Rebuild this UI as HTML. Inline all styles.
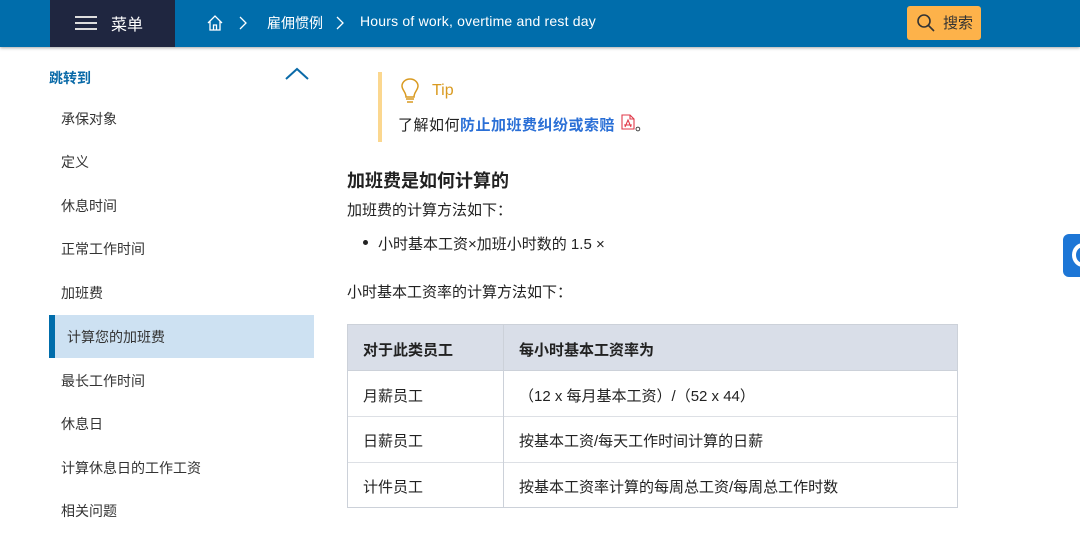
<!DOCTYPE html>
<html><head><meta charset="utf-8"><style>
*{margin:0;padding:0;box-sizing:border-box}
body{width:1080px;height:534px;overflow:hidden;background:#fff;font-family:"Liberation Sans","Noto Sans CJK SC",sans-serif;color:#222;position:relative}
.hdr{position:absolute;left:0;top:0;width:1080px;height:47px;background:#006dab;box-shadow:0 1px 3px rgba(0,0,0,.35)}
.menu{position:absolute;left:50px;top:0;width:125px;height:47px;background:#1f2640;color:#fff;font-size:16px}
.menu span{position:absolute;left:61px;top:11px}
.bar{position:absolute;left:25px;width:22px;height:2px;background:#ddd}
.crumb{position:absolute;top:13px;color:#fff;font-size:14px}
.search{position:absolute;left:907px;top:6px;width:74px;height:34px;background:#fdb24a;border-radius:3px;font-size:15px;color:#333}
.side{position:absolute;left:61px;font-size:14px;color:#333}
.td{position:absolute;font-size:15px;color:#222}
</style></head><body>
<div class="hdr">
 <div class="menu"><div class="bar" style="top:16px"></div><div class="bar" style="top:22px"></div><div class="bar" style="top:28px"></div><span>菜单</span></div>
 <svg style="position:absolute;left:206px;top:14px" width="18" height="18" viewBox="0 0 18 18" fill="none" stroke="#fff" stroke-width="1.3"><path d="M2 9 L9 2 L16 9 M4 7.5 V16 H14 V7.5 M7.5 16 V11 H10.5 V16"/></svg>
 <svg style="position:absolute;left:238px;top:16px" width="10" height="14" fill="none" stroke="#fff" stroke-width="1.3"><path d="M2 1 L8 7 L2 13"/></svg>
 <div class="crumb" style="left:267px">雇佣惯例</div>
 <svg style="position:absolute;left:335px;top:16px" width="10" height="14" fill="none" stroke="#fff" stroke-width="1.3"><path d="M2 1 L8 7 L2 13"/></svg>
 <div class="crumb" style="left:360px;letter-spacing:.2px">Hours of work, overtime and rest day</div>
 <div class="search"><svg style="position:absolute;left:9px;top:7px" width="20" height="20" fill="none" stroke="#333" stroke-width="1.6"><circle cx="8" cy="8" r="6"/><path d="M12.5 12.5 L18 18"/></svg><span style="position:absolute;left:36px;top:6px">搜索</span></div>
</div>
<div style="position:absolute;left:49px;top:68px;font-size:14px;font-weight:bold;color:#0a6aa8">跳转到</div>
<svg style="position:absolute;left:285px;top:67px" width="24" height="14" fill="none" stroke="#0a6aa8" stroke-width="2"><path d="M1 12 L12 2 L23 12"/></svg>
<div class="side" style="top:109px">承保对象</div>
<div class="side" style="top:152px">定义</div>
<div class="side" style="top:196px">休息时间</div>
<div class="side" style="top:239px">正常工作时间</div>
<div class="side" style="top:283px">加班费</div>
<div style="position:absolute;left:49px;top:315px;width:265px;height:43px;background:#cde1f2;border-left:6px solid #006dab"></div>
<div class="side" style="top:327px;left:67px">计算您的加班费</div>
<div class="side" style="top:371px">最长工作时间</div>
<div class="side" style="top:414px">休息日</div>
<div class="side" style="top:458px">计算休息日的工作工资</div>
<div class="side" style="top:501px">相关问题</div>
<div style="position:absolute;left:378px;top:72px;width:4px;height:70px;background:#fbd78f"></div>
<svg style="position:absolute;left:400px;top:78px" width="20" height="28" fill="none" stroke="#d99a20" stroke-width="1.5"><path d="M6 19 C6 14 2 12 2 8 A8 7 0 0 1 18 8 C18 12 14 14 14 19 Z M6 21 H14 M7 24 H13"/></svg>
<div style="position:absolute;left:432px;top:82px;font-size:16px;color:#d99a20">Tip</div>
<div style="position:absolute;left:398px;top:114px;font-size:15px;letter-spacing:.5px">了解如何<b style="color:#2a6fd6">防止加班费纠纷或索赔</b></div>
<svg style="position:absolute;left:621px;top:114px" width="14" height="16" fill="none" stroke="#e03a4a" stroke-width="1.1"><path d="M1 1 H9 L13 5 V15 H1 Z M9 1 V5 H13 M4 13 L7 6 L10 13 M3 11 H11"/></svg>
<div style="position:absolute;left:635px;top:114px;font-size:15px">。</div>
<div style="position:absolute;left:347px;top:167px;font-size:18px;font-weight:bold">加班费是如何计算的</div>
<div style="position:absolute;left:347px;top:199px;font-size:15px">加班费的计算方法如下：</div>
<div style="position:absolute;left:363px;top:240px;width:5px;height:5px;border-radius:50%;background:#222"></div>
<div style="position:absolute;left:378px;top:233px;font-size:15px">小时基本工资×加班小时数的 1.5 ×</div>
<div style="position:absolute;left:347px;top:281px;font-size:15px">小时基本工资率的计算方法如下：</div>
<div style="position:absolute;left:347px;top:324px;width:611px;height:184px;border:1px solid #ccd1d9"></div>
<div style="position:absolute;left:348px;top:325px;width:609px;height:45px;background:#d9dee8"></div>
<div style="position:absolute;left:348px;top:370px;width:609px;height:1px;background:#ccd1d9"></div>
<div style="position:absolute;left:348px;top:416px;width:609px;height:1px;background:#dde0e5"></div>
<div style="position:absolute;left:348px;top:462px;width:609px;height:1px;background:#dde0e5"></div>
<div style="position:absolute;left:503px;top:325px;width:1px;height:183px;background:#ccd1d9"></div>
<div class="td" style="left:363px;top:339px;font-weight:bold">对于此类员工</div>
<div class="td" style="left:519px;top:339px;font-weight:bold">每小时基本工资率为</div>
<div class="td" style="left:363px;top:385px">月薪员工</div>
<div class="td" style="left:519px;top:385px">（12 x 每月基本工资）/（52 x 44）</div>
<div class="td" style="left:363px;top:430px">日薪员工</div>
<div class="td" style="left:519px;top:430px">按基本工资/每天工作时间计算的日薪</div>
<div class="td" style="left:363px;top:476px">计件员工</div>
<div class="td" style="left:519px;top:476px">按基本工资率计算的每周总工资/每周总工作时数</div>
<div style="position:absolute;left:1063px;top:234px;width:30px;height:43px;background:#1d76d6;border-radius:6px"></div>
<div style="position:absolute;left:1072px;top:243px;width:22px;height:24px;border:4px solid #fff;border-radius:50%"></div>
</body></html>
